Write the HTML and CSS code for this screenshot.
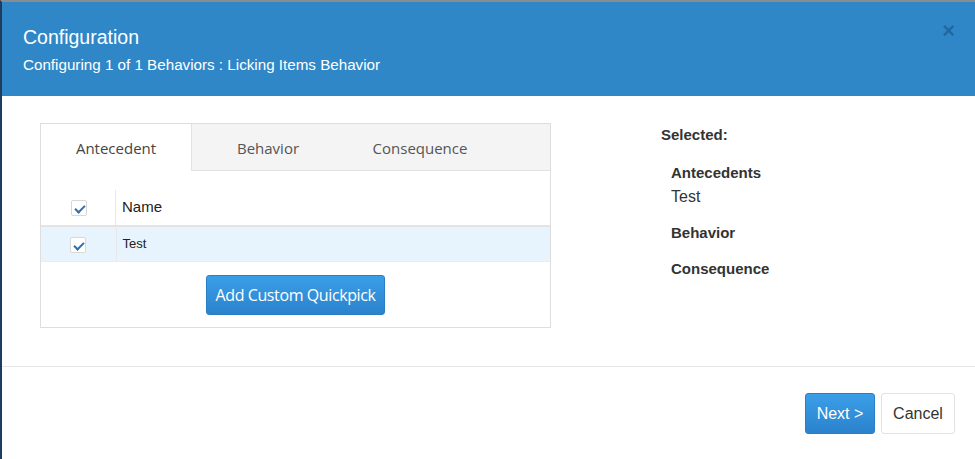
FILE: index.html
```html
<!DOCTYPE html>
<html lang="en">
<head>
  <meta charset="UTF-8">
  <meta name="viewport" content="width=device-width, initial-scale=1.0">
  <title>Configuration</title>
  <link rel="stylesheet" href="styles.css">
</head>
<body>
  <div class="modal">
    <div class="modal-header">
      <div class="titles">
        <h1>Configuration</h1>
        <p>Configuring 1 of 1 Behaviors : Licking Items Behavior</p>
      </div>
      <button class="close" aria-label="Close">&times;</button>
    </div>

    <div class="modal-body">
      <div class="picker">
        <div class="tabs">
          <div class="tab active">Antecedent</div>
          <div class="tab">Behavior</div>
          <div class="tab">Consequence</div>
          <div class="tab-fill"></div>
        </div>
        <table class="grid">
          <thead>
            <tr>
              <th class="check-col"><span class="check"></span></th>
              <th>Name</th>
            </tr>
          </thead>
          <tbody>
            <tr class="selected">
              <td class="check-col"><span class="check"></span></td>
              <td>Test</td>
            </tr>
          </tbody>
        </table>
        <div class="picker-actions">
          <button class="btn-primary quickpick">Add Custom Quickpick</button>
        </div>
      </div>

      <div class="summary">
        <h3>Selected:</h3>
        <div class="group">
          <h4>Antecedents</h4>
          <div class="item">Test</div>
        </div>
        <div class="group">
          <h4>Behavior</h4>
        </div>
        <div class="group">
          <h4>Consequence</h4>
        </div>
      </div>
    </div>

    <div class="modal-footer">
      <button class="btn-primary next">Next &gt;</button>
      <button class="btn-default">Cancel</button>
    </div>
  </div>
</body>
</html>
```

FILE: styles.css
```css
html, body {
  margin: 0;
  height: 100%;
}
body {
  font-family: "Liberation Sans", Arial, sans-serif;
  color: #333;
  background: #fff;
}
.modal {
  height: 100%;
  box-sizing: border-box;
  border-top: 2px solid #8a8d90;
  border-left: 2px solid #1d3c5e;
  display: flex;
  flex-direction: column;
}
.modal-header {
  background: #2f87c8;
  color: #fff;
  height: 94px;
  box-sizing: border-box;
  padding: 23px 20px 0 21px;
  display: flex;
  justify-content: space-between;
  align-items: flex-start;
}
.modal-header h1 {
  margin: 0;
  font-size: 19.5px;
  font-weight: normal;
  line-height: 24px;
}
.modal-header p {
  margin: 7px 0 0;
  font-size: 15.2px;
  line-height: 18px;
}
.close {
  background: none;
  border: 0;
  color: #2367a0;
  font-size: 22px;
  font-weight: bold;
  line-height: 1;
  padding: 0;
  margin-top: -5px;
  cursor: pointer;
  font-family: "Liberation Sans", Arial, sans-serif;
}
.modal-body {
  height: 270px;
  box-sizing: border-box;
  padding: 27px 0 0 38px;
  display: flex;
}
.picker {
  width: 511px;
  height: 205px;
  box-sizing: border-box;
  border: 1px solid #dedede;
  font-family: "Open Sans", "Noto Sans", sans-serif;
}
.tabs {
  display: flex;
  height: 47px;
}
.tab {
  width: 152px;
  box-sizing: border-box;
  text-align: center;
  line-height: 48px;
  font-size: 15px;
  color: #555;
  background: #f4f4f4;
  border-bottom: 1px solid #e2e2e2;
}
.tab.active {
  width: 151px;
  background: #fff;
  border-right: 1px solid #e2e2e2;
  border-bottom: 0;
  color: #444;
}
.tab-fill {
  flex: 1;
  background: #f4f4f4;
  border-bottom: 1px solid #e2e2e2;
}
.grid {
  width: 100%;
  border-collapse: collapse;
  table-layout: fixed;
  font-family: "Liberation Sans", Arial, sans-serif;
}
.grid th, .grid td {
  text-align: left;
  padding: 0 6px;
  color: #222;
}
.grid th {
  font-weight: normal;
  font-size: 15px;
  line-height: 18px;
  vertical-align: bottom;
  padding-top: 27px;
  padding-bottom: 9px;
  border-bottom: 2px solid #e4e4e4;
}
.grid td {
  font-size: 13px;
  line-height: 17px;
  padding-top: 8px;
  padding-bottom: 8px;
}
.grid .check-col {
  width: 75px;
  text-align: center;
  padding-left: 0;
  padding-right: 0;
  border-right: 1px solid #e8e8e8;
}
/* header divider only runs over the lower part of the cell */
.grid th.check-col {
  border-right: 0;
  background: linear-gradient(#e8e8e8, #e8e8e8) right 19px / 1px 100% no-repeat;
}
.grid tr.selected td {
  background: #e8f4fd;
  border-bottom: 1px solid #e6eef4;
}
.check {
  display: inline-block;
  width: 16px;
  height: 16px;
  box-sizing: border-box;
  border: 1px solid #d8d8d8;
  border-radius: 2px;
  background: #fff;
  position: relative;
  vertical-align: middle;
}
.check::after {
  content: "";
  position: absolute;
  left: 5px;
  top: 2px;
  width: 4px;
  height: 8px;
  border: solid #2f6fb0;
  border-width: 0 2px 2px 0;
  transform: rotate(45deg);
}
.picker-actions {
  text-align: center;
  padding-top: 13px;
}
.btn-primary {
  border: 1px solid #2a7fc4;
  border-radius: 3px;
  color: #fff;
  background: linear-gradient(#3a9fe8, #2b82cc);
  cursor: pointer;
}
.quickpick {
  width: 179px;
  height: 40px;
  font-family: "Open Sans", "Noto Sans", sans-serif;
  font-size: 16px;
  letter-spacing: -0.4px;
}
.summary {
  margin-left: 110px;
  padding-top: 3px;
  font-size: 16px;
  color: #333;
}
.summary h3 {
  margin: 0 0 20px;
  font-size: 15px;
  line-height: 18px;
}
.summary .group {
  margin-left: 10px;
  margin-bottom: 18px;
}
.summary h4 {
  margin: 0;
  font-size: 15px;
  line-height: 18px;
}
.summary .item {
  margin-top: 5px;
  line-height: 19px;
}
.modal-footer {
  border-top: 1px solid #e6e6e6;
  padding: 26px 20px 0 0;
  display: flex;
  justify-content: flex-end;
  gap: 6px;
}
.modal-footer button {
  height: 41px;
  font-size: 16px;
  font-family: "Liberation Sans", Arial, sans-serif;
}
.next {
  width: 70px;
}
.btn-default {
  width: 74px;
  background: #fff;
  color: #333;
  border: 1px solid #e2e2e2;
  border-radius: 3px;
  cursor: pointer;
}
```
